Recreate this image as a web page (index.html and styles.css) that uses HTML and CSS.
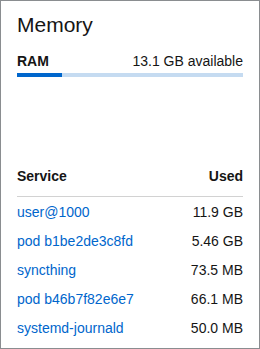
FILE: index.html
```html
<!DOCTYPE html>
<html lang="en">
<head>
    <meta charset="UTF-8">
    <title>Memory</title>
    <link rel="stylesheet" href="styles.css">
</head>
<body>
    <div class="card">
        <h2 class="card-title">Memory</h2>
        <div class="usage">
            <div class="usage-head">
                <span class="usage-label">RAM</span>
                <span class="usage-value">13.1 GB available</span>
            </div>
            <div class="bar">
                <div class="bar-fill" style="width: 20%"></div>
            </div>
        </div>
        <table class="services">
            <thead>
                <tr>
                    <th>Service</th>
                    <th class="num">Used</th>
                </tr>
            </thead>
            <tbody>
                <tr><td><a href="#">user@1000</a></td><td class="num">11.9 GB</td></tr>
                <tr><td><a href="#">pod b1be2de3c8fd</a></td><td class="num">5.46 GB</td></tr>
                <tr><td><a href="#">syncthing</a></td><td class="num">73.5 MB</td></tr>
                <tr><td><a href="#">pod b46b7f82e6e7</a></td><td class="num">66.1 MB</td></tr>
                <tr><td><a href="#">systemd-journald</a></td><td class="num">50.0 MB</td></tr>
            </tbody>
        </table>
    </div>
</body>
</html>
```

FILE: styles.css
```css
body {
    margin: 0;
    padding: 0;
    font-family: "Liberation Sans", Arial, sans-serif;
    color: #151515;
}
.card {
    box-sizing: border-box;
    width: 260px;
    height: 349px;
    border: 1px solid #8a8d90;
    padding: 0 16px;
    background: #fff;
}
.card-title {
    margin: 0;
    padding-top: 11px;
    font-size: 21px;
    font-weight: 400;
    line-height: 26px;
}
.usage {
    margin-top: 13px;
}
.usage-head {
    display: flex;
    justify-content: space-between;
    font-size: 14px;
    line-height: 20px;
}
.usage-label {
    font-weight: 700;
}
.bar {
    height: 4px;
    margin-top: 2px;
    background: #c5dbf1;
}
.bar-fill {
    height: 100%;
    background: #0066cc;
}
.services {
    width: 100%;
    margin-top: 83px;
    border-collapse: collapse;
    font-size: 14px;
}
.services th {
    text-align: left;
    font-weight: 700;
    height: 32px;
    padding: 0 0 4px;
    border-bottom: 1px solid #d2d2d2;
}
.services td {
    height: 28px;
    padding: 1px 0 0;
}
.services .num {
    text-align: right;
}
.services a {
    color: #0066cc;
    text-decoration: none;
}
```
